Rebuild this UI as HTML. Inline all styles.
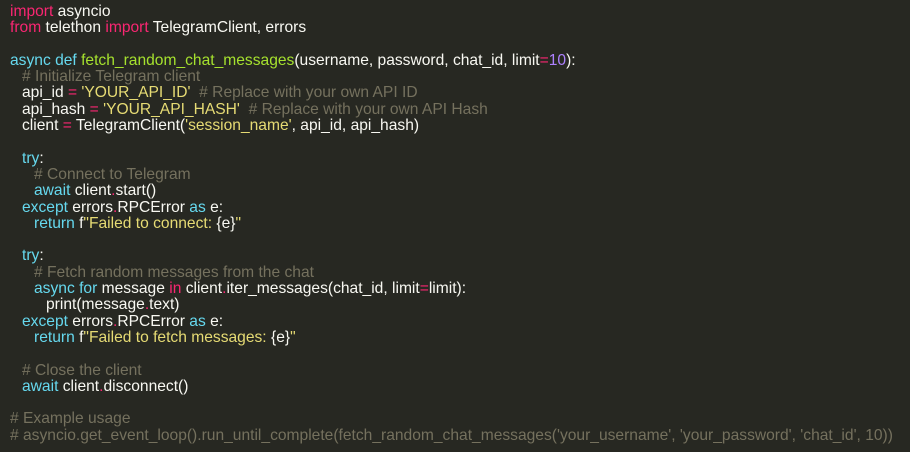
<!DOCTYPE html>
<html><head><meta charset="utf-8"><style>
html,body{margin:0;padding:0;background:#272822;width:910px;height:452px;overflow:hidden}
pre{margin:0;padding:4px 0 0 10px;font-family:"Liberation Sans",sans-serif;font-size:15.6px;line-height:16.3px;color:#f8f8f2;white-space:pre}
.k{color:#66d9ef}.p{color:#f92672}.f{color:#a6e22e}.s{color:#e6db74}.c{color:#75715e}.n{color:#ae81ff}
.i1{padding-left:12px}.i2{padding-left:24px}.i3{padding-left:36px}
div{height:16.3px}
</style></head><body><pre><div><span class="p">import</span> asyncio</div><div><span class="p">from</span> telethon <span class="p">import</span> TelegramClient, errors</div><div></div><div><span class="k">async def</span> <span class="f">fetch_random_chat_messages</span>(username, password, chat_id, limit<span class="p">=</span><span class="n">10</span>):</div><div class="i1"><span class="c"># Initialize Telegram client</span></div><div class="i1">api_id <span class="p">=</span> <span class="s">'YOUR_API_ID'</span>  <span class="c"># Replace with your own API ID</span></div><div class="i1">api_hash <span class="p">=</span> <span class="s">'YOUR_API_HASH'</span>  <span class="c"># Replace with your own API Hash</span></div><div class="i1">client <span class="p">=</span> TelegramClient(<span class="s">'session_name'</span>, api_id, api_hash)</div><div></div><div class="i1"><span class="k">try</span>:</div><div class="i2"><span class="c"># Connect to Telegram</span></div><div class="i2"><span class="k">await</span> client<span class="p">.</span>start()</div><div class="i1"><span class="k">except</span> errors<span class="p">.</span>RPCError <span class="k">as</span> e:</div><div class="i2"><span class="k">return</span> f<span class="s">"Failed to connect: </span>{e}<span class="s">"</span></div><div></div><div class="i1"><span class="k">try</span>:</div><div class="i2"><span class="c"># Fetch random messages from the chat</span></div><div class="i2"><span class="k">async for</span> message <span class="p">in</span> client<span class="p">.</span>iter_messages(chat_id, limit<span class="p">=</span>limit):</div><div class="i3">print(message<span class="p">.</span>text)</div><div class="i1"><span class="k">except</span> errors<span class="p">.</span>RPCError <span class="k">as</span> e:</div><div class="i2"><span class="k">return</span> f<span class="s">"Failed to fetch messages: </span>{e}<span class="s">"</span></div><div></div><div class="i1"><span class="c"># Close the client</span></div><div class="i1"><span class="k">await</span> client<span class="p">.</span>disconnect()</div><div></div><div><span class="c"># Example usage</span></div><div><span class="c"># asyncio.get_event_loop().run_until_complete(fetch_random_chat_messages('your_username', 'your_password', 'chat_id', 10))</span></div></pre></body></html>
